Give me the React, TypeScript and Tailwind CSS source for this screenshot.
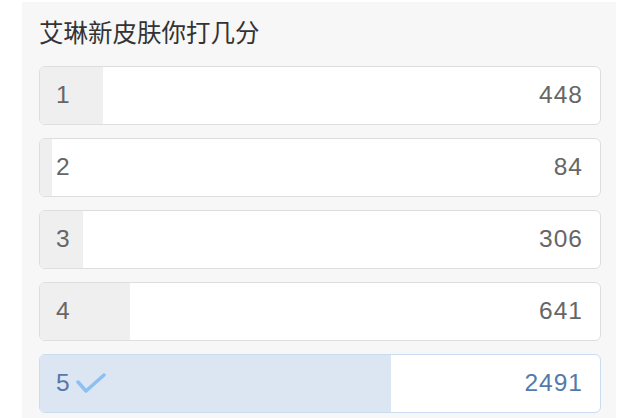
import React from 'react';

const options = [
  { label: '1', votes: 448 },
  { label: '2', votes: 84 },
  { label: '3', votes: 306 },
  { label: '4', votes: 641 },
  { label: '5', votes: 2491, picked: true },
];

const total = options.reduce((sum, o) => sum + o.votes, 0);

export default function App() {
  return (
    <div className="w-[640px] h-[418px] bg-white overflow-hidden">
      <div className="ml-[22px] mr-[24px] mt-[2px] h-[416px] bg-[#f7f7f7] pl-[17px] pr-[15px] pt-[13px]">
        {/* Title */}
        <h1 className="text-[24.5px] leading-[34px] text-[#333] font-['Noto_Sans_CJK_SC',sans-serif]">艾琳新皮肤你打几分</h1>

        {/* Options */}
        <div className="mt-[17px] flex flex-col gap-[13px]">
          {options.map((o) => (
            <div
              key={o.label}
              className={`relative h-[59px] rounded-[6px] border overflow-hidden bg-white ${
                o.picked ? 'border-[#c9dcf0]' : 'border-[#dedede]'
              }`}
            >
              <div
                className={`absolute inset-y-0 left-0 ${o.picked ? 'bg-[#dbe6f2]' : 'bg-[#efefef]'}`}
                style={{ width: `${(o.votes / total) * 100}%` }}
              />
              <div
                className={`relative flex h-full items-center justify-between pl-[16px] pr-[17px] text-[24.5px] tracking-[1px] font-['Liberation_Sans',sans-serif] ${
                  o.picked ? 'text-[#5679ab]' : 'text-[#666]'
                }`}
              >
                <span className="flex items-center gap-[5px]">
                  {o.label}
                  <svg
                    width="30"
                    height="21"
                    viewBox="0 0 30 21"
                    fill="none"
                    className={o.picked ? '' : 'hidden'}
                  >
                    <path d="M2 9 L10 18 L28 2" stroke="#8dc0f2" strokeWidth="3.5" strokeLinecap="round" strokeLinejoin="round" />
                  </svg>
                </span>
                <span>{o.votes}</span>
              </div>
            </div>
          ))}
        </div>
      </div>
    </div>
  );
}
